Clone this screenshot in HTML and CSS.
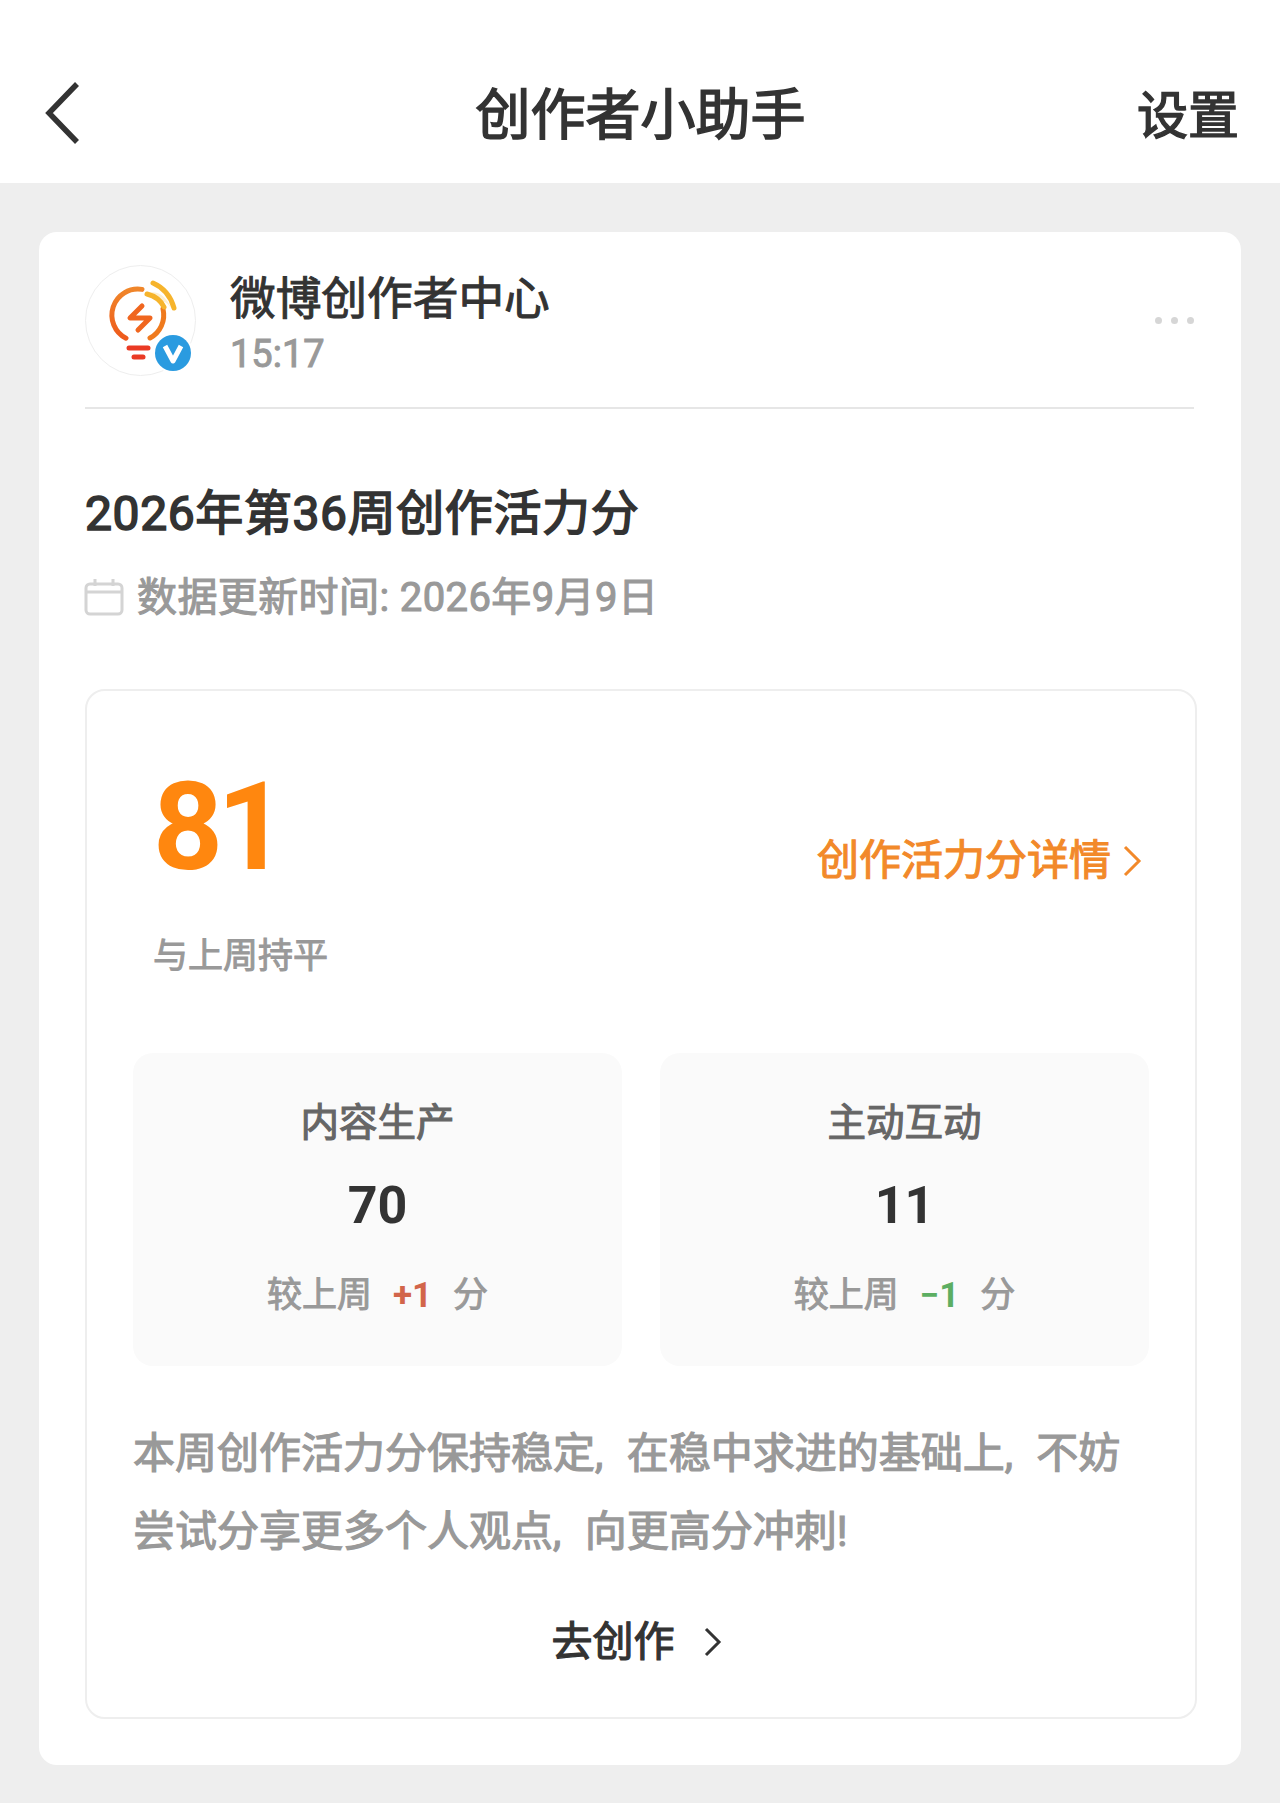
FILE: index.html
```html
<!DOCTYPE html>
<html lang="zh-CN">

<head>
    <meta charset="UTF-8">
    <title>创作者小助手</title>
    <link rel="stylesheet" href="styles.css">
</head>

<body>
    <header class="topbar">
        <svg class="back" viewBox="0 0 40 64" width="40" height="64">
            <path d="M35 3 L7 32 L35 61" fill="none" stroke="#333" stroke-width="5.5" />
        </svg>
        <h1>创作者小助手</h1>
        <span class="settings">设置</span>
    </header>

    <main class="card">
        <div class="author">
            <div class="avatar">
                <svg viewBox="0 0 110 110" width="110" height="110">
                    <defs>
                        <linearGradient id="bulb" x1="0" y1="0" x2="0" y2="1">
                            <stop offset="0" stop-color="#f0862a" />
                            <stop offset="1" stop-color="#ee5a1c" />
                        </linearGradient>
                    </defs>
                    <path d="M57 24.400 A26 26 0 0 0 41 73.200" fill="none" stroke="url(#bulb)" stroke-width="5" stroke-linecap="round" />
                    <path d="M65 73 A26 26 0 0 0 78 44" fill="none" stroke="#ef7a1e" stroke-width="5" stroke-linecap="round" />
                    <path d="M62 28 Q78 24 86 43 Q80 34 72 36 Z" fill="#fdf0d2" />
                    <path d="M62 29 Q74 32 79 42" fill="none" stroke="#f6b42c" stroke-width="5" stroke-linecap="round" />
                    <path d="M68 18 Q84 25 89 43" fill="none" stroke="#f6b42c" stroke-width="5" stroke-linecap="round" />
                    <path d="M57 41 L45 53 H65 L53 65" fill="none" stroke="#f0661f" stroke-width="5" stroke-linecap="round" stroke-linejoin="round" />
                    <path d="M44 83 H63" stroke="#ea3a24" stroke-width="5" stroke-linecap="round" />
                    <path d="M49 92 H58" stroke="#ea3a24" stroke-width="5" stroke-linecap="round" />
                </svg>
                <span class="badge">
                    <svg viewBox="0 0 36 36" width="36" height="36">
                        <circle cx="18" cy="18" r="18" fill="#2a9be0" />
                        <path d="M10 11 L18 26 L26 11" fill="none" stroke="#fff" stroke-width="5" stroke-linejoin="round" />
                    </svg>
                </span>
            </div>
            <div class="author-info">
                <div class="author-name">微博创作者中心</div>
                <div class="author-time">15:17</div>
            </div>
            <div class="more"><i></i><i></i><i></i></div>
        </div>

        <h2 class="title">2026年第36周创作活力分</h2>
        <div class="updated">
            <svg viewBox="0 0 40 40" width="40" height="40">
                <path d="M2 12 a4 4 0 0 1 4 -4 H34 a4 4 0 0 1 4 4 V34 a4 4 0 0 1 -4 4 H6 a4 4 0 0 1 -4 -4 Z M2 16 H38 M11 3 V10 M29 3 V10" fill="none" stroke="#d4d4d4" stroke-width="3" />
            </svg>
            <span>数据更新时间: 2026年9月9日</span>
        </div>

        <section class="panel">
            <div class="score-row">
                <div class="score">81</div>
                <div class="detail-link">创作活力分详情
                    <svg viewBox="0 0 20 32" width="20" height="32">
                        <path d="M3 2 L17 16 L3 30" fill="none" stroke="#f2892a" stroke-width="3" />
                    </svg>
                </div>
            </div>
            <div class="score-note">与上周持平</div>

            <div class="tiles">
                <div class="tile">
                    <div class="tile-name">内容生产</div>
                    <div class="tile-value">70</div>
                    <div class="tile-diff">较上周<b class="up">+1</b>分</div>
                </div>
                <div class="tile">
                    <div class="tile-name">主动互动</div>
                    <div class="tile-value">11</div>
                    <div class="tile-diff">较上周<b class="down">−1</b>分</div>
                </div>
            </div>

            <p class="summary">本周创作活力分保持稳定, 在稳中求进的基础上, 不妨<br>尝试分享更多个人观点, 向更高分冲刺!</p>

            <div class="go">去创作
                <svg viewBox="0 0 20 32" width="20" height="32">
                    <path d="M3 3 L16 16 L3 29" fill="none" stroke="#333" stroke-width="3" />
                </svg>
            </div>
        </section>
    </main>
</body>

</html>
```

FILE: styles.css
```css
* {
    box-sizing: border-box;
}

body {
    margin: 0;
    height: 1803px;
    overflow: hidden;
    background: #eeeeee;
    color: #333333;
    font-family: Roboto, "Noto Sans CJK SC", "Noto Sans", sans-serif;
}

.topbar {
    height: 183px;
    padding: 81px 41px 0 42px;
    background: white;
    display: grid;
    grid-template-columns: 1fr auto 1fr;
    align-items: start;
}

.topbar h1 {
    margin: -2px 0 0 0;
    font-size: 55px;
    line-height: 72px;
    font-weight: normal;
    -webkit-text-stroke: 1.600px #333333;
}

.settings {
    justify-self: end;
    margin-top: 0;
    font-size: 51px;
    line-height: 72px;
    -webkit-text-stroke: 1.500px #333333;
}

.card {
    margin: 49px 39px 0 39px;
    height: 1533px;
    padding: 0 46px 0 46px;
    background: white;
    border-radius: 18px;
}

.author {
    height: 177px;
    padding-top: 33px;
    display: flex;
    align-items: flex-start;
    border-bottom: 2px solid #e6e6e6;
    margin-right: 1px;
}

.avatar {
    position: relative;
    width: 111px;
    height: 111px;
    border-radius: 50%;
    border: 1px solid #eeeeee;
    flex-shrink: 0;
}

.avatar > svg {
    display: block;
    margin: -1px;
}

.badge {
    position: absolute;
    right: 2px;
    bottom: 2px;
    width: 40px;
    height: 40px;
    padding: 2px;
    background: white;
    border-radius: 50%;
}

.badge svg {
    display: block;
}

.author-info {
    margin-left: 34px;
    flex: 1;
}

.author-name {
    font-size: 45.700px;
    line-height: 60px;
    margin-top: 5px;
    -webkit-text-stroke: 1px #333333;
}

.author-time {
    margin-top: 1px;
    font-size: 38px;
    line-height: 46px;
    color: #999999;
    -webkit-text-stroke: 1px #999999;
}

.more {
    display: flex;
    gap: 9px;
    margin-top: 52px;
}

.more i {
    width: 7px;
    height: 7px;
    border-radius: 50%;
    background: #d6d6d6;
}

.title {
    margin: 73px 0 0 0;
    font-size: 48px;
    line-height: 64px;
    letter-spacing: 0.600px;
    font-weight: normal;
    -webkit-text-stroke: 1.600px #333333;
}

.updated {
    margin-top: 24px;
    display: flex;
    align-items: center;
    gap: 13px;
    color: #999999;
    font-size: 40px;
    line-height: 56px;
    letter-spacing: 0.400px;
    -webkit-text-stroke: 1.100px #999999;
}

.updated svg {
    margin-top: -5px;
    margin-left: -1px;
}

.panel {
    margin-top: 63px;
    height: 1030px;
    padding: 0 46px 0 46px;
    border: 2px solid #eeeeee;
    border-radius: 20px;
    margin-right: -2px;
}

.score-row {
    display: flex;
    align-items: flex-end;
    justify-content: space-between;
    height: 230px;
}

.score {
    margin-left: 20px;
    font-size: 122px;
    line-height: 186px;
    font-weight: bold;
    color: #ff870f;
    letter-spacing: -6px;
}

.detail-link {
    display: flex;
    align-items: center;
    gap: 11px;
    margin-right: 7px;
    margin-bottom: 30px;
    color: #f2892a;
    font-size: 42px;
    line-height: 60px;
    -webkit-text-stroke: 1.100px #f2892a;
}

.score-note {
    margin-top: 11px;
    margin-left: 20px;
    color: #999999;
    font-size: 35px;
    line-height: 50px;
    -webkit-text-stroke: 1px #999999;
}

.tiles {
    margin-top: 71px;
    display: grid;
    grid-template-columns: 489px 489px;
    gap: 38px;
}

.tile {
    height: 313px;
    padding-top: 42px;
    background: #fafafa;
    border-radius: 20px;
    text-align: center;
}

.tile-name {
    font-size: 38.500px;
    line-height: 56px;
    color: #666666;
    -webkit-text-stroke: 1.100px #666666;
}

.tile-value {
    margin-top: 25px;
    font-size: 52px;
    line-height: 60px;
    font-weight: bold;
}

.tile-diff {
    margin-top: 33px;
    display: flex;
    justify-content: center;
    gap: 21px;
    color: #999999;
    font-size: 35px;
    line-height: 54px;
    -webkit-text-stroke: 1px #999999;
}

.tile-diff b {
    font-weight: bold;
    -webkit-text-stroke: 0;
}

.up {
    color: #d2654a;
}

.down {
    color: #5cae62;
}

.summary {
    margin: 49px 0 0 0;
    color: #999999;
    font-size: 42px;
    line-height: 78px;
    word-spacing: 13px;
    -webkit-text-stroke: 1.200px #999999;
}

.go {
    margin-top: 41px;
    display: flex;
    align-items: center;
    justify-content: center;
    gap: 28px;
    padding-right: 8px;
    font-size: 41px;
    line-height: 60px;
    -webkit-text-stroke: 1.200px #333333;
}
```
